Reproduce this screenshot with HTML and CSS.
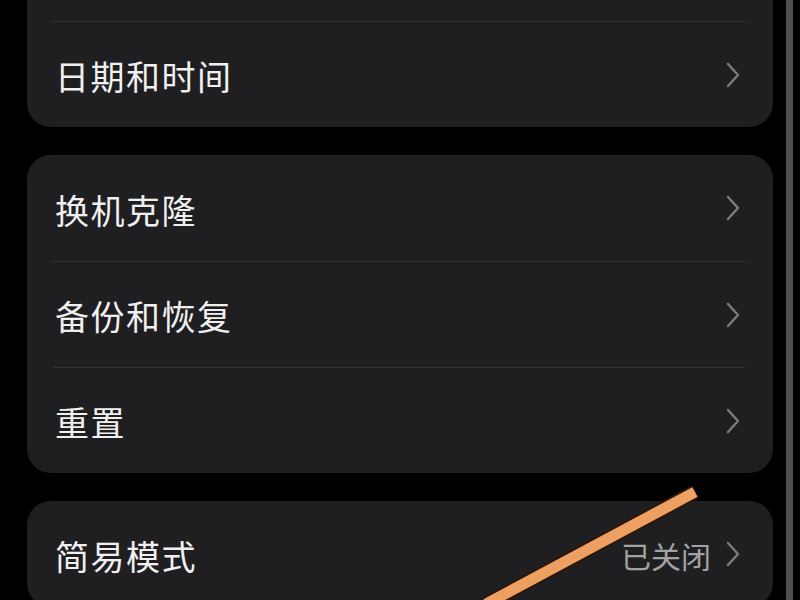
FILE: index.html
```html
<!DOCTYPE html>
<html lang="zh">
<head>
<meta charset="utf-8">
<link rel="stylesheet" href="styles.css">
</head>
<body>
<div class="screen">
  <div class="list">
    <div class="card card-first">
      <div class="row"></div>
      <div class="row sep">
        <span class="label">日期和时间</span>
        <svg class="chev" viewBox="0 0 16 26"><path d="M3 2 L13 13 L3 24"/></svg>
      </div>
    </div>
    <div class="card">
      <div class="row">
        <span class="label">换机克隆</span>
        <svg class="chev" viewBox="0 0 16 26"><path d="M3 2 L13 13 L3 24"/></svg>
      </div>
      <div class="row sep">
        <span class="label">备份和恢复</span>
        <svg class="chev" viewBox="0 0 16 26"><path d="M3 2 L13 13 L3 24"/></svg>
      </div>
      <div class="row sep">
        <span class="label">重置</span>
        <svg class="chev" viewBox="0 0 16 26"><path d="M3 2 L13 13 L3 24"/></svg>
      </div>
    </div>
    <div class="card">
      <div class="row">
        <span class="label">简易模式</span>
        <span class="value">已关闭</span>
        <svg class="chev" viewBox="0 0 16 26"><path d="M3 2 L13 13 L3 24"/></svg>
      </div>
    </div>
  </div>
  <div class="scrollbar"></div>
</div>
<svg class="mark" viewBox="0 0 800 600" width="800" height="600">
  <line x1="695" y1="492" x2="486" y2="604" class="mark-out"/>
  <line x1="695" y1="492" x2="486" y2="604" class="mark-in"/>
</svg>
</body>
</html>
```
FILE: styles.css
```css
html, body {
  margin: 0;
  padding: 0;
  background: #000;
  width: 800px;
  height: 600px;
  overflow: hidden;
  font-family: "Noto Sans CJK SC", "Noto Sans", sans-serif;
}
.screen {
  display: flex;
  padding-left: 27px;
  gap: 13px;
  height: 600px;
}
.list {
  width: 746px;
  display: flex;
  flex-direction: column;
  gap: 28px;
}
.card {
  background: #1f1f21;
  border-radius: 24px;
  display: flex;
  flex-direction: column;
  flex: none;
}
.card-first {
  margin-top: -85px;
}
.row {
  height: 106px;
  display: flex;
  align-items: center;
  padding: 0 32px 0 28px;
  position: relative;
  box-sizing: border-box;
  flex: none;
}
.row.sep {
  border-top: 1px solid #333335;
  margin: 0 27px 0 26px;
  padding: 0 5px 0 2px;
}
.label {
  color: #f0f0f0;
  font-size: 34px;
  letter-spacing: 1.5px;
  flex: 1;
  padding-top: 2px;
}
.value {
  color: #a2a2a2;
  font-size: 30px;
  margin-right: 14px;
  padding-top: 2px;
}
.chev {
  width: 16px;
  height: 26px;
  flex: none;
}
.chev path {
  fill: none;
  stroke: #7c7c7e;
  stroke-width: 2.4;
  stroke-linecap: round;
  stroke-linejoin: round;
}
.scrollbar {
  width: 7px;
  height: 600px;
  background: #4e4e50;
  flex: none;
}
.mark {
  position: absolute;
  left: 0;
  top: 0;
  pointer-events: none;
}
.mark-out {
  stroke: #2a1608;
  stroke-width: 15;
}
.mark-in {
  stroke: #ee9f62;
  stroke-width: 11;
}
```
